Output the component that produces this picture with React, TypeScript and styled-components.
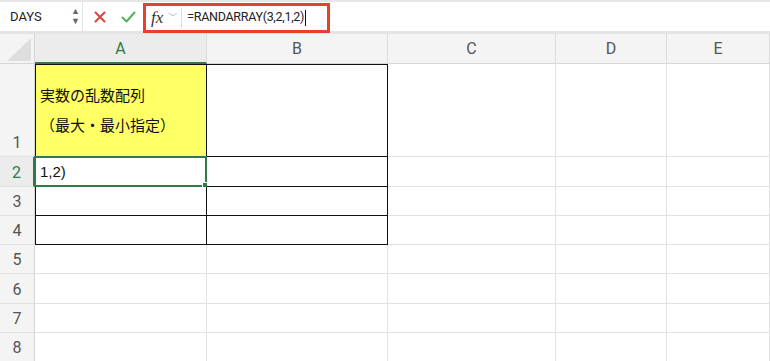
import styled, { createGlobalStyle } from "styled-components"

const GlobalStyle = createGlobalStyle`
  html, body {
    margin: 0;
    padding: 0;
    background: #ffffff;
    font-family: "Liberation Sans", "Noto Sans CJK JP", sans-serif;
    overflow: hidden;
  }
`

const GREEN = "#2f7a45"

const Page = styled.div`
  width: 770px;
  height: 361px;
  overflow: hidden;
  background: #fff;
`

const Toolbar = styled.div`
  height: 29px;
  display: flex;
  align-items: stretch;
  background: #f3f3f3;
  border-top: 2px solid #e6e6e6;
  border-bottom: 3px solid #e4e4e4;
`

const NameBox = styled.div`
  width: 82px;
  background: #fff;
  display: flex;
  align-items: center;
  justify-content: space-between;
  padding: 0 2px 0 10px;
  box-sizing: border-box;
  font-family: Roboto, sans-serif;
  font-size: 13px;
  color: #222;
`

const Spinner = styled.div`
  display: flex;
  flex-direction: column;
  gap: 3px;
  color: #666;
  font-size: 9px;
  line-height: 7px;
`

const ActionArea = styled.div`
  width: 61px;
  display: flex;
  align-items: center;
  justify-content: space-around;
  padding-left: 4px;
  box-sizing: border-box;
  background: #fff;
  border-left: 1px solid #e4e4e4;
`

const FormulaBar = styled.div`
  flex: 1;
  display: flex;
  align-items: center;
  background: #fff;
`

const Highlight = styled.div`
  width: 187px;
  height: 30px;
  margin-top: 2px;
  box-sizing: border-box;
  border: 3px solid #e8402a;
  display: flex;
  align-items: center;
`

const Fx = styled.span`
  font-family: "Liberation Serif", serif;
  font-style: italic;
  font-size: 17px;
  color: #333;
  margin-left: 5px;
`

const Chevron = styled.span`
  color: #aaa;
  font-size: 9px;
  margin: 0 4px 0 5px;
`

const Divider = styled.div`
  width: 1px;
  height: 20px;
  background: #ddd;
  margin-right: 5px;
`

const Formula = styled.span`
  font-family: Roboto, sans-serif;
  font-size: 12.5px;
  color: #222;
  letter-spacing: -0.3px;
`

const Caret = styled.span`
  display: inline-block;
  width: 1px;
  height: 16px;
  background: #111;
  vertical-align: middle;
  margin-left: 1px;
`

const Sheet = styled.div`
  display: grid;
  grid-template-columns: 35px 172px 181px 168px 111px 1fr;
  grid-template-rows: 30px 93px 30px 29px 29px 29px 30px 29px 29px;
`

const Corner = styled.div`
  background: #f4f4f4;
  border-right: 1px solid #d6d6d6;
  border-bottom: 1px solid #d6d6d6;
  position: relative;
  overflow: hidden;
`

const ColHead = styled.div<{ $active?: boolean }>`
  background: ${(p) => (p.$active ? "#ececec" : "#f4f4f4")};
  border-right: 1px solid #dcdcdc;
  border-bottom: ${(p) => (p.$active ? `2px solid ${GREEN}` : "1px solid #d6d6d6")};
  display: flex;
  align-items: center;
  justify-content: center;
  font-family: Roboto, sans-serif;
  font-size: 16px;
  color: ${(p) => (p.$active ? GREEN : "#555")};
`

const RowHead = styled.div<{ $active?: boolean }>`
  background: ${(p) => (p.$active ? "#ececec" : "#f4f4f4")};
  border-right: ${(p) => (p.$active ? `2px solid ${GREEN}` : "1px solid #d6d6d6")};
  border-bottom: 1px solid #e2e2e2;
  display: flex;
  align-items: flex-end;
  justify-content: center;
  padding-bottom: 4px;
  box-sizing: border-box;
  font-family: Roboto, sans-serif;
  font-size: 16px;
  color: ${(p) => (p.$active ? GREEN : "#555")};
`

const Cell = styled.div<{ $boxed?: boolean; $left?: boolean; $top?: boolean; $fill?: string }>`
  position: relative;
  background: ${(p) => p.$fill || "#fff"};
  border-right: 1px solid ${(p) => (p.$boxed ? "#111" : "#e2e2e2")};
  border-bottom: 1px solid ${(p) => (p.$boxed ? "#111" : "#e2e2e2")};
  box-shadow: ${(p) =>
    [p.$left ? "inset 1px 0 0 #111" : "", p.$top ? "inset 0 1px 0 #111" : ""]
      .filter(Boolean)
      .join(", ") || "none"};
  font-size: 15px;
  color: #111;
  padding-left: 5px;
  display: flex;
  align-items: center;
  box-sizing: border-box;
`

const TitleText = styled.div`
  font-family: "Noto Sans CJK JP", sans-serif;
  font-size: 15px;
  line-height: 30px;
  margin-top: 0;
  color: #111;
  white-space: nowrap;
`

const Selection = styled.div`
  position: absolute;
  left: -1px;
  top: -1px;
  right: -1px;
  bottom: -1px;
  border: 2px solid ${GREEN};
  pointer-events: none;
`

const Handle = styled.div`
  position: absolute;
  right: -4px;
  bottom: -4px;
  width: 5px;
  height: 5px;
  background: ${GREEN};
  border: 1px solid #fff;
`

const cols = ["A", "B", "C", "D", "E"]
const rowNums = [1, 2, 3, 4, 5, 6, 7, 8]

export default function App() {
  return (
    <Page>
      <GlobalStyle />
      <Toolbar>
        <NameBox>
          DAYS
          <Spinner>
            <span>▲</span>
            <span>▼</span>
          </Spinner>
        </NameBox>
        <ActionArea>
          <svg width="12" height="12" viewBox="0 0 12 12">
            <path d="M1.5 1.5 L10.5 10.5 M10.5 1.5 L1.5 10.5" stroke="#e0413a" strokeWidth="2" strokeLinecap="round" />
          </svg>
          <svg width="15" height="12" viewBox="0 0 15 12">
            <path d="M1.5 6.5 L5.5 10.5 L13.5 1.5" stroke="#55b05a" strokeWidth="2" fill="none" strokeLinecap="round" strokeLinejoin="round" />
          </svg>
        </ActionArea>
        <FormulaBar>
          <Highlight>
            <Fx>fx</Fx>
            <Chevron>﹀</Chevron>
            <Divider />
            <Formula>
              =RANDARRAY(3,2,1,2)
              <Caret />
            </Formula>
          </Highlight>
        </FormulaBar>
      </Toolbar>
      <Sheet>
        <Corner>
          <svg width="35" height="30" style={{ position: "absolute", left: 0, top: 0 }}>
            <polygon points="31,4 31,27 7,27" fill="#dedede" />
          </svg>
        </Corner>
        {cols.map((c) => (
          <ColHead key={c} $active={c === "A"}>
            {c}
          </ColHead>
        ))}
        {rowNums.map((r) => (
          <Row key={r} r={r} />
        ))}
      </Sheet>
    </Page>
  )
}

function Row({ r }: { r: number }) {
  const boxed = r <= 4
  return (
    <>
      <RowHead $active={r === 2}>{r}</RowHead>
      <Cell $boxed={boxed} $left={boxed} $top={r === 1} $fill={r === 1 ? "#ffff66" : undefined}>
        {r === 1 && (
          <TitleText>
            実数の乱数配列
            <br />
            （最大・最小指定）
          </TitleText>
        )}
        {r === 2 && (
          <>
            <span>1,2)</span>
            <Selection>
              <Handle />
            </Selection>
          </>
        )}
      </Cell>
      <Cell $boxed={boxed} $top={r === 1} />
      <Cell />
      <Cell />
      <Cell />
    </>
  )
}
